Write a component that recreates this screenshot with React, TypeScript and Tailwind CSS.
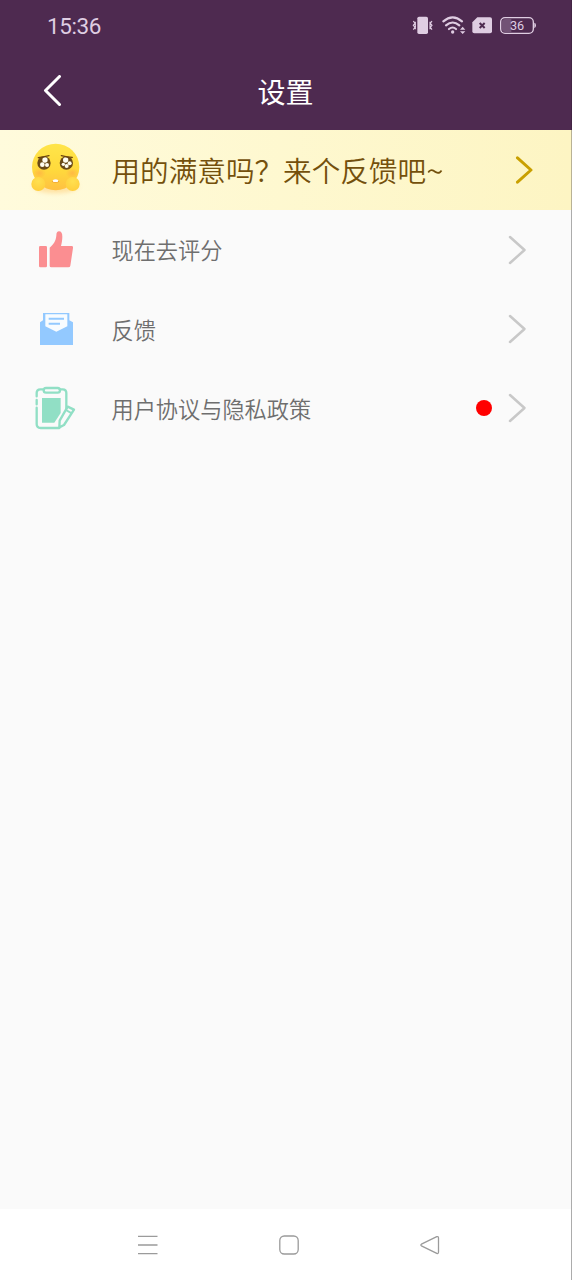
import type { ReactNode } from "react";

const items = [
  { label: "现在去评分", icon: <ThumbIcon />, dot: false },
  { label: "反馈", icon: <MailIcon />, dot: false },
  { label: "用户协议与隐私政策", icon: <ClipboardIcon />, dot: true },
];

function ThumbIcon() {
  return (
    <svg className="h-[70px] w-20" viewBox="0 0 240 210" fill="#fb8e91">
      <rect x="57" y="93" width="24" height="64" rx="4" />
      <path d="M89 98C100 88 107 80 109 62C109 52 112 49 117 49C124 49 127 55 127 65C127 76 125 84 123 93H155Q160 93 159 99L151 152Q150 157 145 157H94Q89 157 89 152Z" />
    </svg>
  );
}

function MailIcon() {
  return (
    <svg className="mt-0.5 h-[70px] w-20" viewBox="0 0 240 210">
      <path d="M60 82L69 76V54H148V76L159 82V150H60Z" fill="#93c9ff" />
      <path d="M76 58H142V94L109 110L76 94Z" fill="#f8fcff" />
      <path d="M86 71H132M86 86H120" stroke="#93c9ff" strokeWidth="6" />
    </svg>
  );
}

function ClipboardIcon() {
  return (
    <svg className="mt-1 h-[70px] w-20" viewBox="0 0 240 210" fill="none" stroke="#91dfc5" strokeWidth="7">
      <path d="M50 64V54Q50 43 61 43H70M119 43H128Q139 43 139 54V100M50 75V88M50 98V147Q50 159 62 159H118" strokeLinecap="round" />
      <rect x="71" y="39" width="49" height="14" rx="7" />
      <path d="M66 69H122V114L103 143H66Z" fill="#91dfc5" stroke="none" />
      <path d="M143 95L162 104L132 150L118 157L119 137Z" strokeWidth="7" strokeLinejoin="round" />
      <path d="M138 105L155 115" strokeWidth="6" />
    </svg>
  );
}

function EmojiIcon() {
  return (
    <svg className="h-[76px] w-20" viewBox="0 0 240 228">
      <defs>
        <linearGradient id="face" x1="0" y1="0" x2="0" y2="1">
          <stop offset="0" stopColor="#ffe54a" />
          <stop offset="0.55" stopColor="#ffda3c" />
          <stop offset="1" stopColor="#ffc042" />
        </linearGradient>
        <radialGradient id="hand" cx="0.5" cy="0.3" r="0.7">
          <stop offset="0" stopColor="#ffe050" />
          <stop offset="1" stopColor="#ffce3c" />
        </radialGradient>
        <radialGradient id="blush">
          <stop offset="0" stopColor="#ff9d4a" stopOpacity="0.5" />
          <stop offset="1" stopColor="#ff9d4a" stopOpacity="0" />
        </radialGradient>
        <filter id="soft" x="-30%" y="-30%" width="160%" height="160%">
          <feGaussianBlur stdDeviation="6" />
        </filter>
      </defs>
      <ellipse cx="107" cy="162" rx="68" ry="22" fill="#ffcf78" opacity="0.55" filter="url(#soft)" />
      <ellipse cx="107" cy="105" rx="71" ry="70" fill="url(#face)" />
      <ellipse cx="58" cy="123" rx="20" ry="16" fill="url(#blush)" />
      <ellipse cx="157" cy="123" rx="20" ry="16" fill="url(#blush)" />
      <circle cx="55" cy="156" r="21" fill="url(#hand)" />
      <circle cx="158" cy="156" r="21" fill="url(#hand)" />
      <g fill="#6a4a17">
        <circle cx="72" cy="93" r="20" />
        <circle cx="139" cy="93" r="20" />
      </g>
      <g fill="#fffdf0">
        <circle cx="75" cy="84" r="8" />
        <circle cx="67" cy="98" r="7" />
        <circle cx="81" cy="99" r="6" />
        <circle cx="137" cy="84" r="8" />
        <circle cx="130" cy="97" r="5" />
        <circle cx="149" cy="94" r="6" />
        <circle cx="140" cy="102" r="6" />
      </g>
      <path d="M55 77Q68 75 87 71M124 71Q142 76 157 76" fill="none" stroke="#6b430d" strokeWidth="4" strokeLinecap="round" />
      <path d="M95 149Q107 134 118 149Q107 155 95 149Z" fill="#efa236" />
      <path d="M98 145Q107 138 115 145L113 150H100Z" fill="#fff" />
    </svg>
  );
}

function Chevron({ className }: { className: string }) {
  return (
    <svg className={className} viewBox="0 0 20 30" fill="none" stroke="currentColor" strokeLinecap="round" strokeLinejoin="round">
      <path d="M3 2L17.5 15L3 28" />
    </svg>
  );
}

function StatusBar() {
  return (
    <div className="flex h-[52px] items-center justify-between pl-[47px] pr-[35px] text-[#dfcde2]">
      <span className="font-['Roboto','Noto_Sans',sans-serif] text-[22.5px] leading-none tracking-[-0.4px]">15:36</span>
      <svg className="mb-0.5 h-[20px] w-[124px]" viewBox="0 0 372 60" fill="currentColor">
        <rect x="16" y="5" width="32" height="52" rx="5" />
        <path d="M4 18L9 25L4 31L9 37L4 44M60 18L55 25L60 31L55 37L60 44M10 20V43M54 20V43" fill="none" stroke="currentColor" strokeWidth="3.5" />
        <g fill="none" stroke="currentColor" strokeWidth="6.5" strokeLinecap="round">
          <path d="M94 19Q122 -5 150 19" />
          <path d="M102 31Q122 14 142 31" />
          <path d="M111 42Q122 33 132 42" />
        </g>
        <circle cx="122" cy="51" r="5" />
        <path d="M144 44L152 35L160 44ZM144 49L152 57L160 49Z" />
        <path d="M196 7H234Q240 7 240 13V49Q240 55 234 55H187Q181 55 181 49V22Z" />
        <path d="M203 24L218 39M218 24L203 39" stroke="#4e2a50" strokeWidth="6" />
        <rect x="266" y="8" width="98" height="47" rx="13" fill="none" stroke="currentColor" strokeWidth="4" />
        <path d="M279 12H298V51H279Q270 51 270 42V21Q270 12 279 12Z" opacity="0.25" />
        <path d="M367 23Q372 24 372 31Q372 39 367 40Z" />
        <text x="315" y="45" textAnchor="middle" className="font-['Roboto',sans-serif] text-[38px]">36</text>
      </svg>
    </div>
  );
}

function Row({ icon, label, dot }: { icon: ReactNode; label: string; dot: boolean }) {
  return (
    <li className="flex h-[79.4px] items-center pl-5 pr-[44px]">
      {icon}
      <span className="mb-px ml-[11.5px] flex-1 text-[22.2px] font-[350] leading-8 text-[#6e6e6e]">{label}</span>
      {dot && <span className="mr-[15px] size-4 rounded-full bg-[#ff0000]" />}
      <Chevron className="h-[30px] w-5 stroke-[2.5] text-[#c8c8c8]" />
    </li>
  );
}

export default function App() {
  return (
    <div className="flex h-[1280px] w-[572px] flex-col bg-[#fafafa] font-['Noto_Sans_CJK_SC',sans-serif]">
      <header className="h-[130px] border-r border-[#422444] bg-[#4e2a50]">
        <StatusBar />
        <div className="grid h-[78px] grid-cols-[1fr_auto_1fr] items-center">
          <svg className="ml-[42px] h-8 w-5" viewBox="0 0 20 32" fill="none" stroke="#fff" strokeWidth="3" strokeLinecap="round" strokeLinejoin="round">
            <path d="M17.5 1.5L3.5 15.5L17.5 29.5" />
          </svg>
          <h1 className="text-[28px] leading-9 text-white">设置</h1>
        </div>
      </header>
      <section className="flex h-20 items-center border-r border-[#b9b295] bg-linear-to-r from-[#fffbdc] to-[#fdf5c3] pl-5 pr-[37px]">
        <EmojiIcon />
        <span className="ml-[11.5px] flex-1 text-[28.6px] font-[350] leading-10 text-[#74500c]">用的满意吗？来个反馈吧<span className="ml-px inline-block scale-x-110">~</span></span>
        <Chevron className="h-7 w-5 stroke-[3.2] text-[#c9a000]" />
      </section>
      <ul className="flex-1 border-r border-[#acacac]">
        {items.map((item) => (
          <Row key={item.label} {...item} />
        ))}
      </ul>
      <nav className="flex h-[71px] items-center border-r border-[#acacac] bg-white pl-[136px] text-[#9b9b9b]">
        <svg className="h-6 w-6" viewBox="0 0 24 24" stroke="currentColor" strokeWidth="1.3">
          <path d="M2 3.3H21.5M2 12H21.5M2 20.7H21.5" />
        </svg>
        <svg className="ml-[117px] h-6 w-6" viewBox="0 0 24 24" fill="none" stroke="currentColor" strokeWidth="1.3">
          <rect x="2.8" y="3" width="18.4" height="18" rx="4.5" />
        </svg>
        <svg className="ml-[118px] h-6 w-6" viewBox="0 0 24 24" fill="none" stroke="currentColor" strokeWidth="1.3" strokeLinejoin="round">
          <path d="M2.4 11.2L17.8 3.6Q19.5 3.2 19.5 5V19Q19.5 21 17.8 20.4L2.4 12.8Q1.4 12 2.4 11.2Z" />
        </svg>
      </nav>
    </div>
  );
}
